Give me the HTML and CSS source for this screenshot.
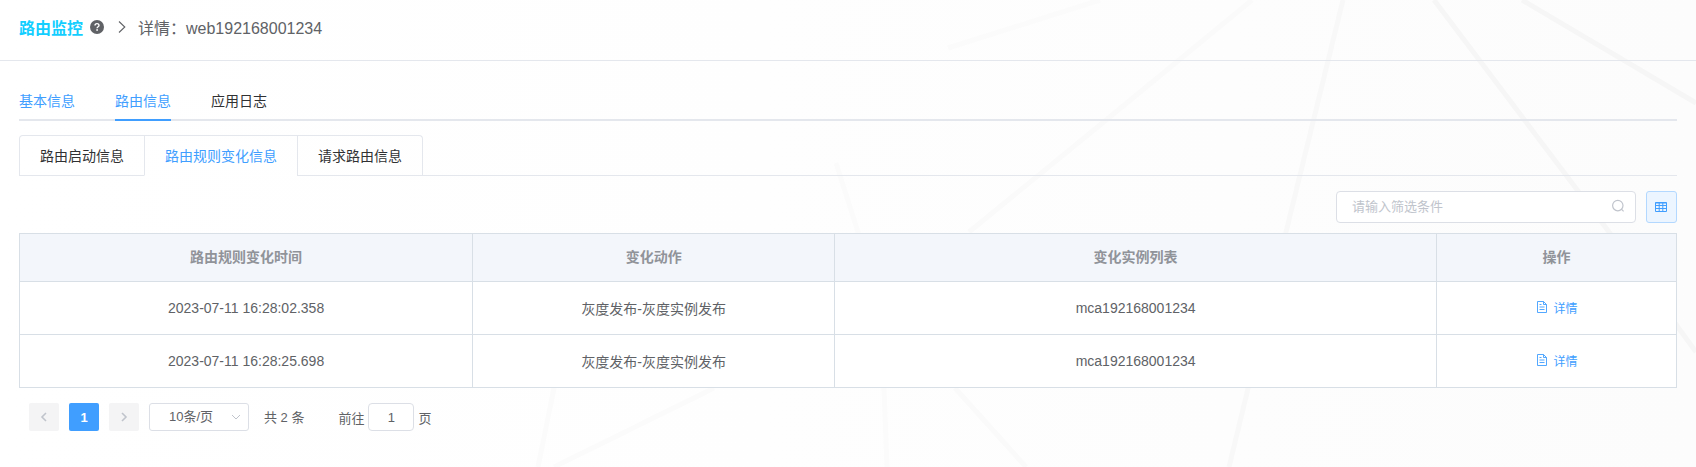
FILE: index.html
```html
<!DOCTYPE html>
<html lang="zh-CN">
<head>
<meta charset="utf-8">
<meta name="viewport" content="width=device-width, initial-scale=1">
<title>路由监控</title>
<link rel="stylesheet" href="styles.css">
</head>
<body>
<svg class="backdrop" viewBox="0 0 1696 467" preserveAspectRatio="xMaxYMin slice" aria-hidden="true">
  <defs>
    <linearGradient id="shade" x1="0" y1="0" x2="1" y2="0">
      <stop offset="0" stop-color="#fff"/>
      <stop offset="0.45" stop-color="#fefefe"/>
      <stop offset="1" stop-color="#fcfcfc"/>
    </linearGradient>
  </defs>
  <rect width="1696" height="467" fill="url(#shade)"/>
  <g fill="none" stroke-width="5">
    <path stroke="#fbfbfb" d="M1100 0 948 48M836 163 858 232 884 388 887 467M554 388 538 467M714 388 554 467"/>
    <path stroke="#fafafa" d="M1252 0 1100 125 969 232M955 388 1026 467"/>
    <path stroke="#f8f8f8" d="M1343 0 1286 232 1229 467"/>
    <path stroke="#f6f6f6" d="M1434 0 1609 232 1696 352M1522 0 1696 103"/>
  </g>
</svg>

<header class="page-header">
  <a class="page-title" href="#">路由监控</a>
  <svg class="help-icon" viewBox="0 0 14 14" role="img" aria-label="帮助">
    <circle cx="7" cy="7" r="7" fill="#606266"/>
    <path d="M5 5.6C5 4.3 5.8 3.6 7 3.6s2 .7 2 1.8C9 6.8 7.1 6.8 7.1 8.3" fill="none" stroke="#fff" stroke-width="1.4"/>
    <rect x="6.3" y="9.2" width="1.6" height="1.6" fill="#fff"/>
  </svg>
  <svg class="crumb-arrow" viewBox="0 0 8 14" aria-hidden="true">
    <path d="M1 1.5 6.8 7 1 12.5" fill="none" stroke="#606266" stroke-width="1.1"/>
  </svg>
  <span class="crumb">详情：web192168001234</span>
</header>

<main class="content">
  <nav class="tabs">
    <a class="tab tab-hover" href="#basic">基本信息</a>
    <a class="tab tab-active" href="#route" aria-current="page">路由信息</a>
    <a class="tab" href="#log">应用日志</a>
  </nav>

  <div class="card-tabs">
    <div class="card-nav" role="tablist">
      <button class="card-tab" type="button" role="tab" aria-selected="false">路由启动信息</button>
      <button class="card-tab card-tab-active" type="button" role="tab" aria-selected="true">路由规则变化信息</button>
      <button class="card-tab" type="button" role="tab" aria-selected="false">请求路由信息</button>
    </div>
  </div>

  <div class="toolbar">
    <div class="search">
      <input class="search-input" type="text" placeholder="请输入筛选条件" aria-label="请输入筛选条件">
      <svg class="search-icon" viewBox="0 0 14 14" aria-hidden="true">
        <circle cx="6.8" cy="6.6" r="5.2" fill="none" stroke="#c0c4cc" stroke-width="1.2"/>
        <path d="M10.4 10.2 12.6 12.4" stroke="#c0c4cc" stroke-width="1.2"/>
      </svg>
    </div>
    <button class="columns-btn" type="button" aria-label="列设置">
      <svg class="columns-icon" viewBox="0 0 12 12" aria-hidden="true">
        <path d="M.5 1.5h11v9H.5zM.5 4.5h11M.5 7.5h11M4.2 1.5v9M7.8 1.5v9M.5 2h11" fill="none" stroke="#409eff"/>
      </svg>
    </button>
  </div>

  <table class="grid">
    <colgroup><col class="col-time"><col class="col-action"><col><col class="col-ops"></colgroup>
    <thead>
      <tr><th>路由规则变化时间</th><th>变化动作</th><th>变化实例列表</th><th>操作</th></tr>
    </thead>
    <tbody>
      <tr>
        <td>2023-07-11 16:28:02.358</td><td>灰度发布-灰度实例发布</td><td>mca192168001234</td>
        <td><a class="detail" href="#detail-1"><svg class="doc-icon" viewBox="0 0 12 12" aria-hidden="true"><path d="M1.5.5h6l3 3v8h-9zM7.5.5v3h3M3.5 3.5h2M3.5 6h5M3.5 8.5h5" fill="none" stroke="#409eff" stroke-width="0.9"/></svg>详情</a></td>
      </tr>
      <tr>
        <td>2023-07-11 16:28:25.698</td><td>灰度发布-灰度实例发布</td><td>mca192168001234</td>
        <td><a class="detail" href="#detail-2"><svg class="doc-icon" viewBox="0 0 12 12" aria-hidden="true"><path d="M1.5.5h6l3 3v8h-9zM7.5.5v3h3M3.5 3.5h2M3.5 6h5M3.5 8.5h5" fill="none" stroke="#409eff" stroke-width="0.9"/></svg>详情</a></td>
      </tr>
    </tbody>
  </table>

  <div class="pagination">
    <button class="pager" type="button" disabled aria-label="上一页"><svg class="pager-icon" viewBox="0 0 12 12" aria-hidden="true"><path d="M8 2 4 6l4 4" fill="none" stroke="#c0c4cc" stroke-width="1.6"/></svg></button>
    <button class="pager pager-active" type="button" aria-current="page">1</button>
    <button class="pager" type="button" disabled aria-label="下一页"><svg class="pager-icon" viewBox="0 0 12 12" aria-hidden="true"><path d="M4 2l4 4-4 4" fill="none" stroke="#c0c4cc" stroke-width="1.6"/></svg></button>
    <div class="size">
      <select class="size-select" aria-label="每页条数"><option>10条/页</option></select>
      <svg class="size-arrow" viewBox="0 0 10 10" aria-hidden="true"><path d="M1 3l4 4 4-4" fill="none" stroke="#c0c4cc"/></svg>
    </div>
    <span class="total">共 2 条</span>
    <label class="jump">前往<input class="jump-input" type="text" value="1">页</label>
  </div>
</main>
</body>
</html>
```
FILE: styles.css
```css
* {
  box-sizing: border-box;
}

body {
  margin: 0;
  position: relative;
  min-height: 100vh;
  background: #fff;
  color: #606266;
  font-family: "Liberation Sans", "Noto Sans CJK SC", sans-serif;
  font-size: 14px;
}

a {
  color: inherit;
  text-decoration: none;
}

button,
input,
select {
  margin: 0;
  font: inherit;
  color: inherit;
}

svg {
  display: block;
  flex: none;
}

.backdrop {
  position: absolute;
  z-index: -1;
  top: 0;
  left: 0;
  width: 100%;
  height: 100%;
}

.page-header {
  display: flex;
  align-items: center;
  height: 61px;
  padding: 0 19px 7px;
  border-bottom: 1px solid #e4e7ed;
  font-size: 16px;
}

.page-title {
  color: #13ceff;
  font-weight: 700;
}

.help-icon {
  width: 14px;
  height: 14px;
  margin-left: 7px;
}

.crumb-arrow {
  width: 8px;
  height: 14px;
  margin: 0 12px 0 14px;
}

.content {
  padding: 20px 19px;
}

.tabs {
  display: flex;
  gap: 40px;
  height: 40px;
  box-shadow: inset 0 -2px #e4e7ed;
  line-height: 40px;
  color: #303133;
}

.tab-hover {
  color: #409eff;
}

.tab-active {
  color: #409eff;
  box-shadow: inset 0 -2px #409eff;
}

.card-tabs {
  display: flex;
  height: 41px;
  margin-top: 14px;
  box-shadow: inset 0 -1px #e4e7ed;
}

.card-nav {
  display: flex;
  border: 1px solid #e4e7ed;
  border-bottom: 0;
  border-radius: 4px 4px 0 0;
}

.card-tab {
  padding: 0 20px 2px;
  border: 0;
  border-bottom: 1px solid #e4e7ed;
  background: none;
  color: #303133;
}

.card-tab + .card-tab {
  border-left: 1px solid #e4e7ed;
}

.card-tab-active {
  border-bottom-color: #fff;
  color: #409eff;
}

.toolbar {
  display: flex;
  justify-content: flex-end;
  gap: 10px;
  margin: 15px 0 10px;
}

.search {
  position: relative;
  width: 300px;
}

.search-input {
  width: 100%;
  height: 32px;
  padding: 0 30px 2px 15px;
  border: 1px solid #dcdfe6;
  border-radius: 4px;
  background: #fff;
  font-size: 13px;
}

.search-input::placeholder {
  color: #c0c4cc;
}

.search-icon {
  position: absolute;
  top: 8px;
  right: 11px;
  width: 14px;
  height: 14px;
}

.columns-btn {
  display: flex;
  align-items: center;
  justify-content: center;
  width: 31px;
  height: 32px;
  padding: 0 1px 1px 0;
  border: 1px solid #b3d8ff;
  border-radius: 3px;
  background: #ecf5ff;
}

.columns-icon {
  width: 12px;
  height: 12px;
}

.grid {
  width: 100%;
  table-layout: fixed;
  border-collapse: collapse;
  background: #fff;
  text-align: center;
}

.grid th,
.grid td {
  padding: 0;
  border: 1px solid #d8dfe6;
}

.grid th {
  height: 48px;
  padding-bottom: 3px;
  background: #f3f6fb;
  color: #909399;
  font-weight: 700;
}

.grid td {
  height: 53px;
}

.col-time {
  width: 27.35%;
}

.col-action {
  width: 21.85%;
}

.col-ops {
  width: 240px;
}

.detail {
  display: inline-flex;
  align-items: center;
  gap: 5px;
  padding: 0 0 2px 1px;
  color: #409eff;
  font-size: 12px;
  vertical-align: middle;
}

.doc-icon {
  width: 12px;
  height: 12px;
}

.pagination {
  display: flex;
  align-items: center;
  gap: 10px;
  margin-top: 15px;
  padding-left: 10px;
  font-size: 13px;
}

.pager {
  display: flex;
  align-items: center;
  justify-content: center;
  width: 30px;
  height: 28px;
  padding: 0;
  border: 0;
  border-radius: 2px;
  background: #f4f4f5;
  font-weight: 700;
}

.pager-active {
  background: #409eff;
  color: #fff;
}

.pager-icon {
  width: 12px;
  height: 12px;
}

.size {
  position: relative;
}

.size-select {
  appearance: none;
  width: 100px;
  height: 28px;
  padding: 0 26px 2px 10px;
  border: 1px solid #dcdfe6;
  border-radius: 3px;
  background: #fff;
  text-align: center;
  text-align-last: center;
}

.size-arrow {
  position: absolute;
  top: 9px;
  right: 8px;
  width: 10px;
  height: 10px;
}

.total {
  margin-left: 5px;
  padding-bottom: 2px;
}

.jump {
  display: flex;
  align-items: center;
  margin-left: 24px;
}

.jump-input {
  width: 46px;
  height: 28px;
  margin: 0 4px;
  padding: 0 3px;
  border: 1px solid #dcdfe6;
  border-radius: 4px;
  background: #fff;
  text-align: center;
}
```
